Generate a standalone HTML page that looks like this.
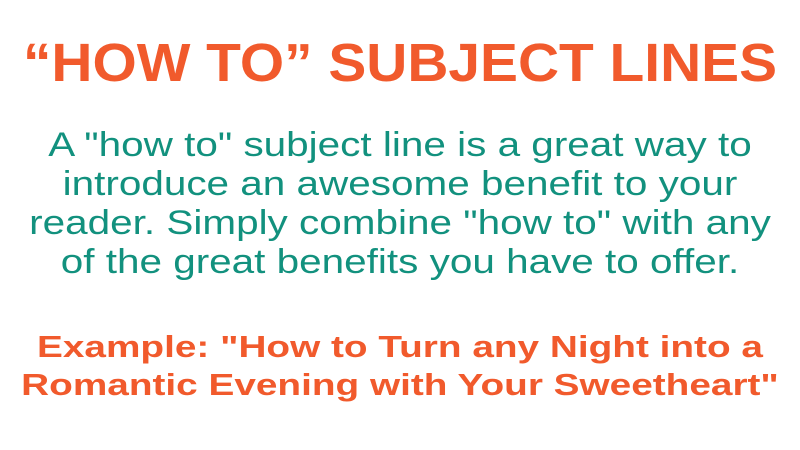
<!DOCTYPE html>
<html><head><style>
body{margin:0;width:800px;height:450px;background:#fff;overflow:hidden;font-family:"Liberation Sans",sans-serif;text-align:center}
div{position:absolute;left:0;width:800px;white-space:nowrap;transform-origin:400px 0}
.t{top:30px;font-weight:bold;font-size:54px;line-height:66px;color:#f15a2c;transform:scaleX(1.053)}
.b{top:126px;font-size:34px;line-height:39px;color:#12917e;transform:scaleX(1.19)}
.e{top:328px;font-weight:bold;font-size:31px;line-height:38px;color:#f15a2c;transform:scaleX(1.25)}
</style></head><body>
<div class="t">“HOW TO” SUBJECT LINES</div>
<div class="b">A "how to" subject line is a great way to<br>introduce an awesome benefit to your<br>reader. Simply combine "how to" with any<br>of the great benefits you have to offer.</div>
<div class="e">Example: "How to Turn any Night into a<br>Romantic Evening with Your Sweetheart"</div>
</body></html>
